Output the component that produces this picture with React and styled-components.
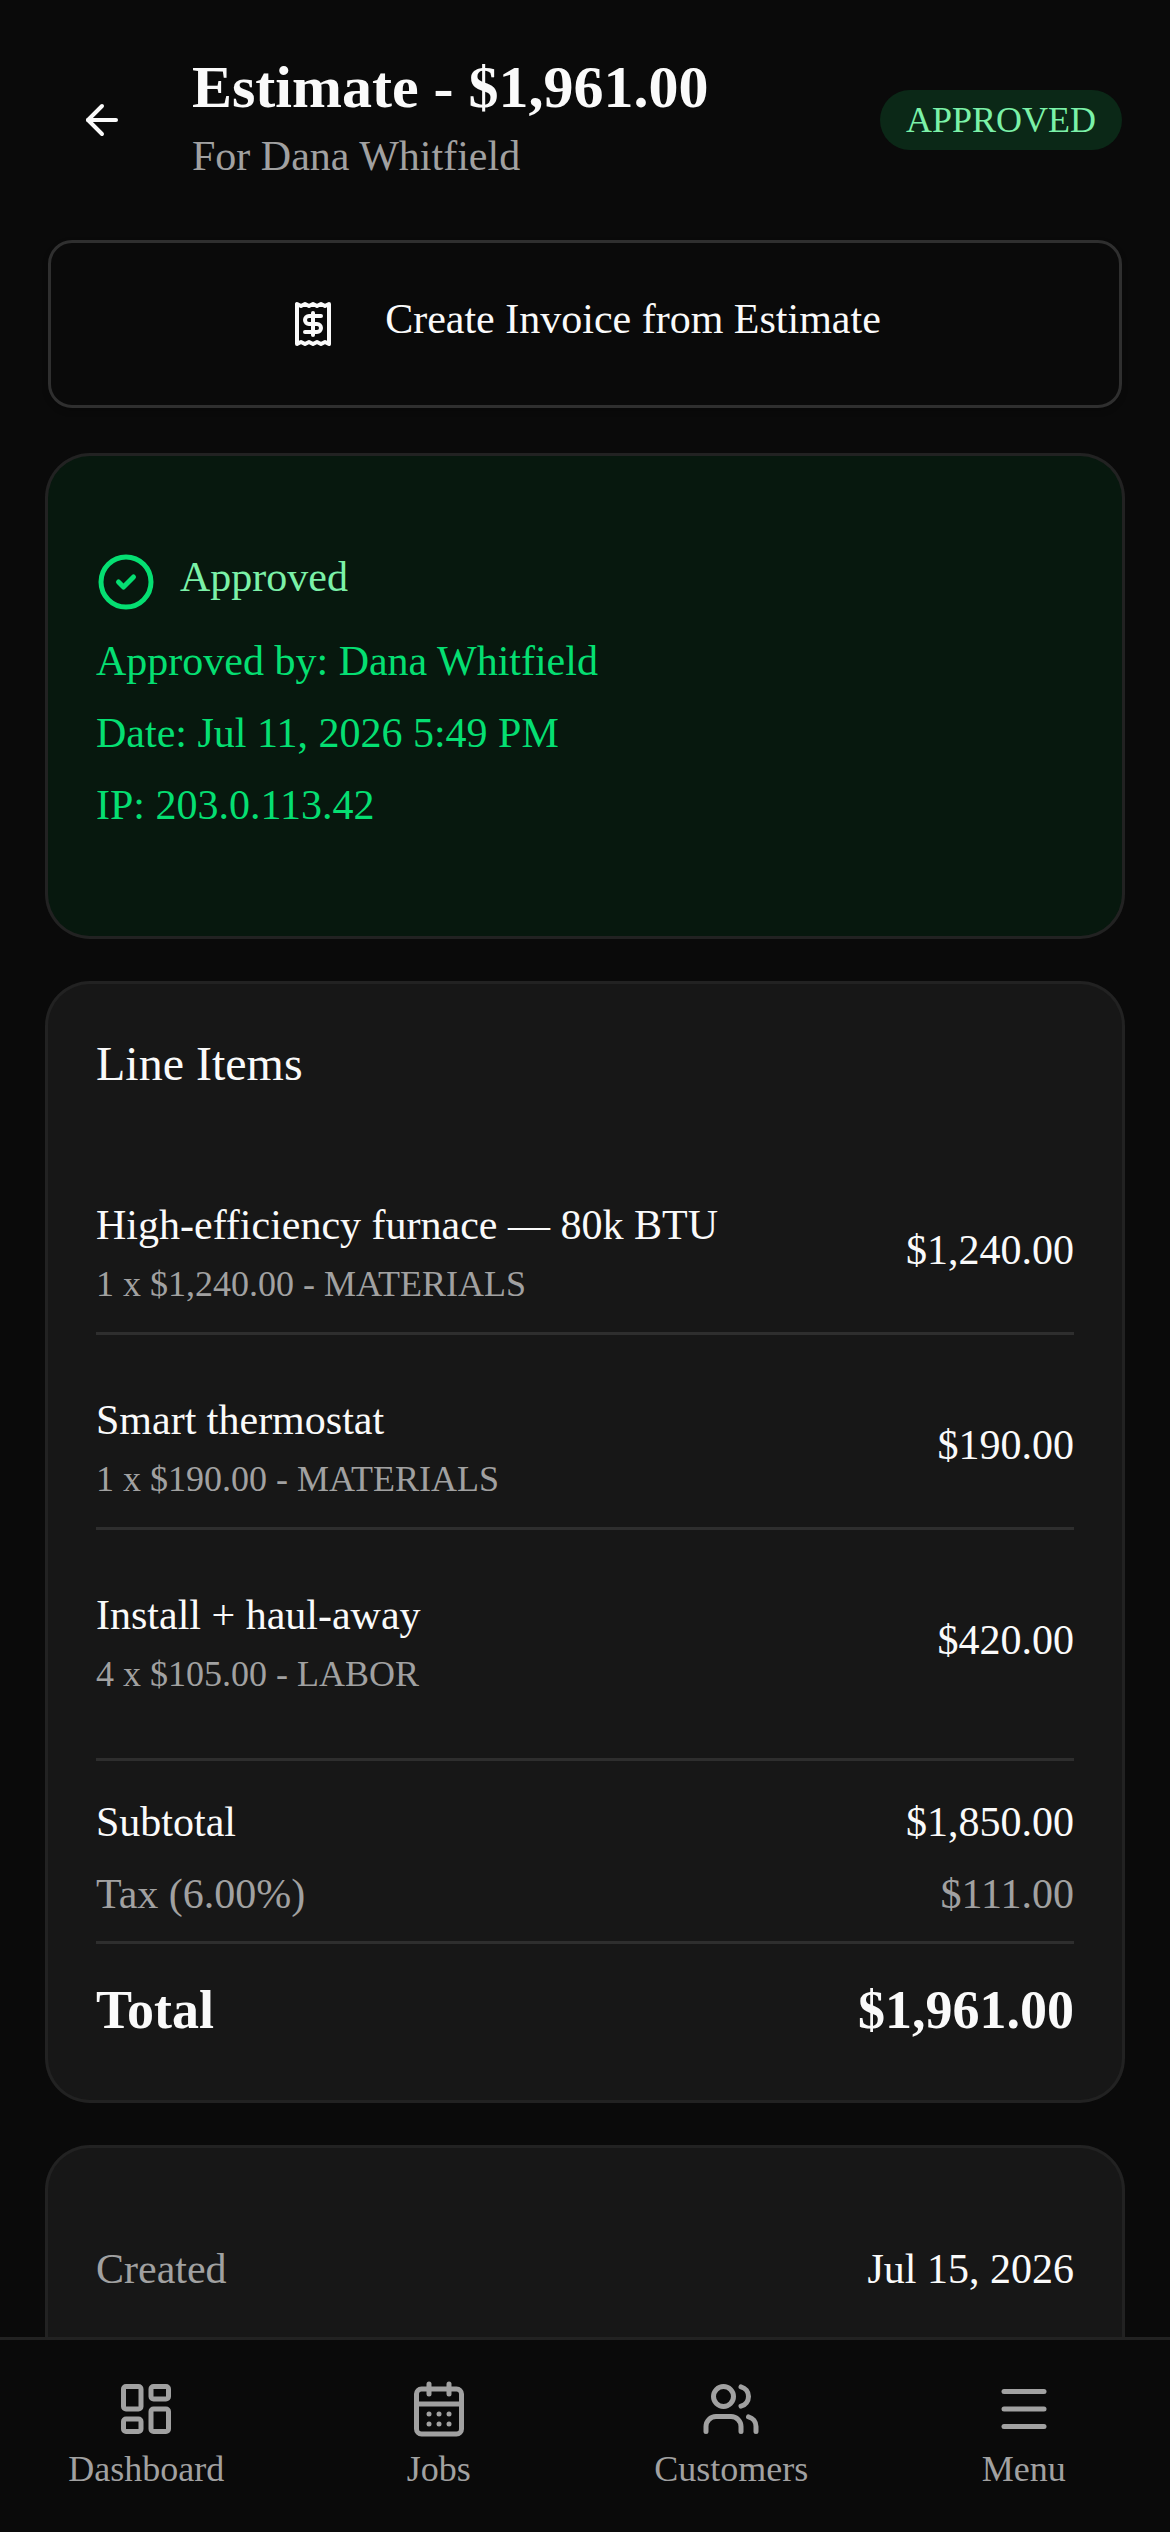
import React from 'react';
import styled, { createGlobalStyle } from 'styled-components';
import {
  ArrowLeft,
  CalendarDays,
  CircleCheck,
  LayoutDashboard,
  Menu,
  Receipt,
  Users,
} from 'lucide-react';

const GlobalStyle = createGlobalStyle`
  *, *::before, *::after {
    box-sizing: border-box;
  }

  body {
    margin: 0;
    background-color: #0a0a0a;
    color: #fafafa;
    font-family: 'Liberation Serif', 'Times New Roman', serif;
    font-size: 42px;
    line-height: 60px;
  }

  h1, h2, p, ul, dl, dd {
    margin: 0;
    padding: 0;
  }
`;

const Shell = styled.div`
  display: flex;
  flex-direction: column;
  height: 100vh;
`;

const Content = styled.main`
  flex: 1;
  min-height: 0;
  overflow-y: auto;
  scrollbar-width: none;
  padding: 0 48px;
`;

const Header = styled.header`
  display: flex;
  align-items: center;
  gap: 36px;
  min-height: 240px;
`;

const BackButton = styled.button`
  display: flex;
  align-items: center;
  justify-content: center;
  width: 108px;
  height: 108px;
  padding: 0;
  border: 0;
  border-radius: 24px;
  background: none;
  color: #fafafa;
  cursor: pointer;
`;

const Heading = styled.div`
  flex: 1;
  min-width: 0;
  padding-bottom: 4px;
`;

const Title = styled.h1`
  margin-bottom: 2px;
  font-size: 60px;
  font-weight: 700;
  line-height: 74px;
`;

const Subtitle = styled.p`
  color: #a1a1a1;
`;

const Badge = styled.span`
  padding: 6px 26px;
  border-radius: 30px;
  background-color: #0b2817;
  color: #7bf1a8;
  font-size: 36px;
  line-height: 48px;
`;

const Stack = styled.div`
  display: flex;
  flex-direction: column;
  gap: 48px;
  padding-bottom: 48px;
`;

const OutlineButton = styled.button`
  display: flex;
  align-items: center;
  justify-content: center;
  gap: 48px;
  width: 100%;
  min-height: 168px;
  border: 3px solid #2f2f2f;
  border-radius: 24px;
  background-color: #0a0a0a;
  box-shadow: 0 3px 6px rgba(0, 0, 0, 0.2);
  color: #fafafa;
  font: inherit;
  cursor: pointer;
`;

const Label = styled.span`
  padding-bottom: 10px;
`;

const Card = styled.section`
  padding: ${props => (props.$titled ? '48px' : '91px 48px 95px')};
  border-radius: 42px;
  background-color: ${props => (props.$approved ? '#07180e' : '#171717')};
  box-shadow: 0 0 0 3px #222222;
`;

const CardTitle = styled.h2`
  font-size: 48px;
  font-weight: 400;
  line-height: 64px;
`;

const Status = styled.div`
  display: flex;
  align-items: center;
  gap: 24px;
  margin-bottom: 8px;
  color: #7bf1a8;

  svg {
    color: #05df72;
  }
`;

const StatusLine = styled.p`
  color: #05df72;
  line-height: 72px;
`;

const ItemList = styled.ul`
  margin: 44px 0 36px;
  list-style: none;
`;

const Item = styled.li`
  display: flex;
  align-items: center;
  justify-content: space-between;
  gap: 48px;
  padding: 55px 0 24px;

  &:not(:last-child) {
    border-bottom: 3px solid #2e2e2e;
  }
`;

const ItemMeta = styled.p`
  margin-top: 5px;
  color: #a1a1a1;
  font-size: 36px;
  line-height: 48px;
`;

const Amount = styled.span`
  padding-bottom: 4px;
`;

const Totals = styled.dl`
  padding-top: 25px;
  border-top: 3px solid #2e2e2e;
`;

const TotalRow = styled.div`
  display: flex;
  justify-content: space-between;
  color: ${props => (props.$muted ? '#a1a1a1' : '#fafafa')};
  line-height: 72px;
`;

const GrandTotal = styled(TotalRow)`
  margin-top: 11px;
  padding-top: 24px;
  border-top: 3px solid #2e2e2e;
  font-size: 54px;
  font-weight: 700;
  line-height: 84px;
`;

const DateRow = styled.div`
  display: flex;
  justify-content: space-between;

  dt {
    color: #a1a1a1;
  }
`;

const BottomNav = styled.nav`
  display: grid;
  grid-template-columns: repeat(4, 1fr);
  align-items: center;
  height: 195px;
  border-top: 3px solid #222222;
  background-color: #0a0a0a;
`;

const NavLink = styled.a`
  display: flex;
  flex-direction: column;
  align-items: center;
  gap: 6px;
  color: #a1a1a1;
  font-size: 36px;
  line-height: 48px;
  text-decoration: none;
`;

const items = [
  { name: 'High-efficiency furnace — 80k BTU', meta: '1 x $1,240.00 - MATERIALS', amount: '$1,240.00' },
  { name: 'Smart thermostat', meta: '1 x $190.00 - MATERIALS', amount: '$190.00' },
  { name: 'Install + haul-away', meta: '4 x $105.00 - LABOR', amount: '$420.00' },
];

const navLinks = [
  { label: 'Dashboard', href: '#dashboard', Icon: LayoutDashboard },
  { label: 'Jobs', href: '#jobs', Icon: CalendarDays },
  { label: 'Customers', href: '#customers', Icon: Users },
  { label: 'Menu', href: '#menu', Icon: Menu },
];

const App = () => {
  return (<>
    <GlobalStyle />
    <Shell>
      <Content>
        <Header>
          <BackButton type='button' aria-label='Back'>
            <ArrowLeft size={48} />
          </BackButton>
          <Heading>
            <Title>Estimate - $1,961.00</Title>
            <Subtitle>For Dana Whitfield</Subtitle>
          </Heading>
          <Badge>APPROVED</Badge>
        </Header>

        <Stack>
          <OutlineButton type='button'>
            <Receipt size={48} />
            <Label>Create Invoice from Estimate</Label>
          </OutlineButton>

          <Card $approved>
            <Status>
              <CircleCheck size={60} />
              <Label>Approved</Label>
            </Status>
            <StatusLine>Approved by: Dana Whitfield</StatusLine>
            <StatusLine>Date: Jul 11, 2026 5:49 PM</StatusLine>
            <StatusLine>IP: 203.0.113.42</StatusLine>
          </Card>

          <Card $titled>
            <CardTitle>Line Items</CardTitle>
            <ItemList>
              {items.map(item => (
                <Item key={item.name}>
                  <div>
                    <p>{item.name}</p>
                    <ItemMeta>{item.meta}</ItemMeta>
                  </div>
                  <Amount>{item.amount}</Amount>
                </Item>
              ))}
            </ItemList>
            <Totals>
              <TotalRow>
                <dt>Subtotal</dt>
                <dd>$1,850.00</dd>
              </TotalRow>
              <TotalRow $muted>
                <dt>Tax (6.00%)</dt>
                <dd>$111.00</dd>
              </TotalRow>
              <GrandTotal>
                <dt>Total</dt>
                <dd>$1,961.00</dd>
              </GrandTotal>
            </Totals>
          </Card>

          <Card>
            <dl>
              <DateRow>
                <dt>Created</dt>
                <dd>Jul 15, 2026</dd>
              </DateRow>
            </dl>
          </Card>
        </Stack>
      </Content>

      <BottomNav aria-label='Main'>
        {navLinks.map(({ label, href, Icon }) => (
          <NavLink key={label} href={href}>
            <Icon size={60} />
            {label}
          </NavLink>
        ))}
      </BottomNav>
    </Shell>
  </>);
};

export default App;
